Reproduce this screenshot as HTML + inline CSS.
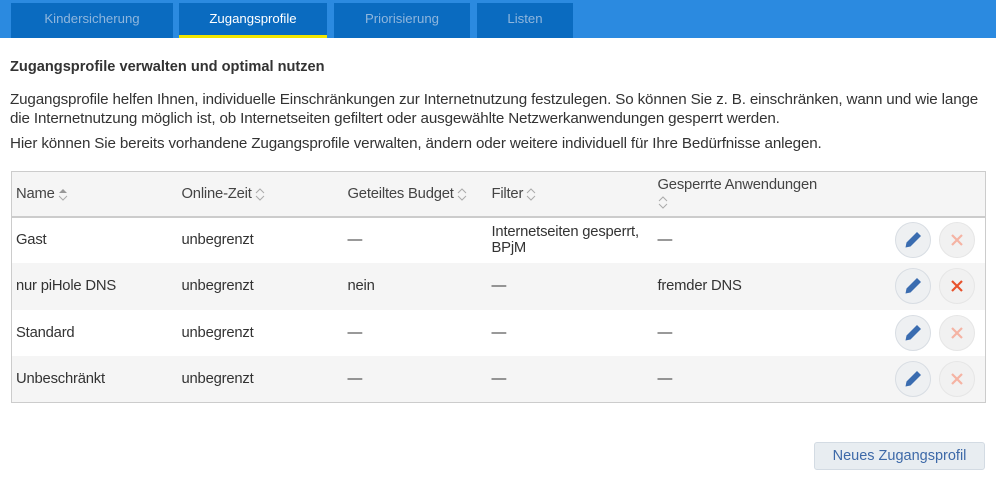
<!DOCTYPE html>
<html><head><meta charset="utf-8"><style>
*{margin:0;padding:0;box-sizing:border-box}
body{width:996px;height:487px;background:#fff;font-family:"Liberation Sans",sans-serif;color:#333;position:relative;overflow:hidden}
.bar{position:absolute;left:0;top:0;width:996px;height:38px;background:#2b8ae0}
.tab{position:absolute;top:3px;height:35px;background:#0a6bc0;color:#8fb6dd;font-size:13.2px;text-align:center;line-height:31px}
.tab.act{color:#fff}
.tab.act:after{content:"";position:absolute;left:0;right:0;bottom:0;height:3px;background:#f2e600}
.t{position:absolute;font-size:15.2px;white-space:nowrap;letter-spacing:-0.15px}
h1{position:absolute;left:10px;top:59px;font-size:14.6px;font-weight:bold;color:#333}
table{position:absolute;left:11px;top:171px;width:975px;border-collapse:collapse;border:1px solid #ccc;font-size:14.8px;letter-spacing:-0.2px}
td,th{text-align:left;font-weight:normal;padding:0 0 0 4px;vertical-align:middle;white-space:nowrap}
th{height:45px;background:#f5f5f5;border-bottom:2px solid #ccc;color:#444}
tr.r{height:46.5px}
tr.g{background:#f5f5f5}
.s{display:inline-block;vertical-align:middle;margin-left:3px}
.btn{position:absolute;width:36px;height:36px;border-radius:50%;border:1px solid #d8dde3;background:#eef0f2}
.btn.x{background:#f1f1f1;border-color:#e6e6e6}
.nb{position:absolute;left:814px;top:442px;width:171px;height:28px;border:1px solid #d3dbe3;border-radius:3px;background:#e8edf1;color:#3d69a8;font-size:14.5px;text-align:center;line-height:26px}
</style></head><body>
<div class="bar"></div>
<div class="tab" style="left:11px;width:162px">Kindersicherung</div>
<div class="tab act" style="left:179px;width:148px">Zugangsprofile</div>
<div class="tab" style="left:334px;width:136px">Priorisierung</div>
<div class="tab" style="left:477px;width:96px">Listen</div>
<h1>Zugangsprofile verwalten und optimal nutzen</h1>
<div class="t" style="left:10px;top:91px">Zugangsprofile helfen Ihnen, individuelle Einschränkungen zur Internetnutzung festzulegen. So können Sie z. B. einschränken, wann und wie lange</div>
<div class="t" style="left:10px;top:110px">die Internetnutzung möglich ist, ob Internetseiten gefiltert oder ausgewählte Netzwerkanwendungen gesperrt werden.</div>
<div class="t" style="left:10px;top:135px">Hier können Sie bereits vorhandene Zugangsprofile verwalten, ändern oder weitere individuell für Ihre Bedürfnisse anlegen.</div>
<table>
<tr><th style="width:166px">Name<svg class="s" width="10" height="14"><path d="M1 6 5 2 9 6Z" fill="#999"/><path d="M1 9 5 13 9 9" stroke="#aaa" fill="none"/></svg></th>
<th style="width:166px">Online-Zeit<svg class="s" width="10" height="14"><path d="M1 6 5 2 9 6M1 9 5 13 9 9" stroke="#aaa" fill="none"/></svg></th>
<th style="width:144px">Geteiltes Budget<svg class="s" width="10" height="14"><path d="M1 6 5 2 9 6M1 9 5 13 9 9" stroke="#aaa" fill="none"/></svg></th>
<th style="width:166px">Filter<svg class="s" width="10" height="14"><path d="M1 6 5 2 9 6M1 9 5 13 9 9" stroke="#aaa" fill="none"/></svg></th>
<th style="vertical-align:top;padding-top:5px">Gesperrte Anwendungen<br><svg class="s" style="margin:2px 0 0 0" width="10" height="14"><path d="M1 6 5 2 9 6M1 9 5 13 9 9" stroke="#aaa" fill="none"/></svg></th></tr>
<tr class="r"><td>Gast</td><td>unbegrenzt</td><td>—</td><td>Internetseiten gesperrt,<br>BPjM</td><td>—</td></tr>
<tr class="r g"><td>nur piHole DNS</td><td>unbegrenzt</td><td>nein</td><td>—</td><td>fremder DNS</td></tr>
<tr class="r"><td>Standard</td><td>unbegrenzt</td><td>—</td><td>—</td><td>—</td></tr>
<tr class="r g"><td>Unbeschränkt</td><td>unbegrenzt</td><td>—</td><td>—</td><td>—</td></tr>
</table>
<div id="btns"></div>
<script>
var ys=[222,268,315,361],h='';
ys.forEach(function(y,i){
h+='<div class="btn" style="left:895px;top:'+y+'px"><svg width="36" height="36" style="position:absolute;left:-1px;top:-1px"><path d="M10.5 25.5 11.5 20.5 22 10 26 14 15.5 24.5Z" fill="#3a6cb0"/></svg></div>';
var c=i==1?'#e8522c':'#f5b3a3';
h+='<div class="btn x" style="left:939px;top:'+y+'px"><svg width="36" height="36" style="position:absolute;left:-1px;top:-1px"><path d="M13 13 23 23M23 13 13 23" stroke="'+c+'" stroke-width="2.2"/></svg></div>';
});
document.getElementById('btns').innerHTML=h;
</script>
<div class="nb">Neues Zugangsprofil</div>
</body></html>
